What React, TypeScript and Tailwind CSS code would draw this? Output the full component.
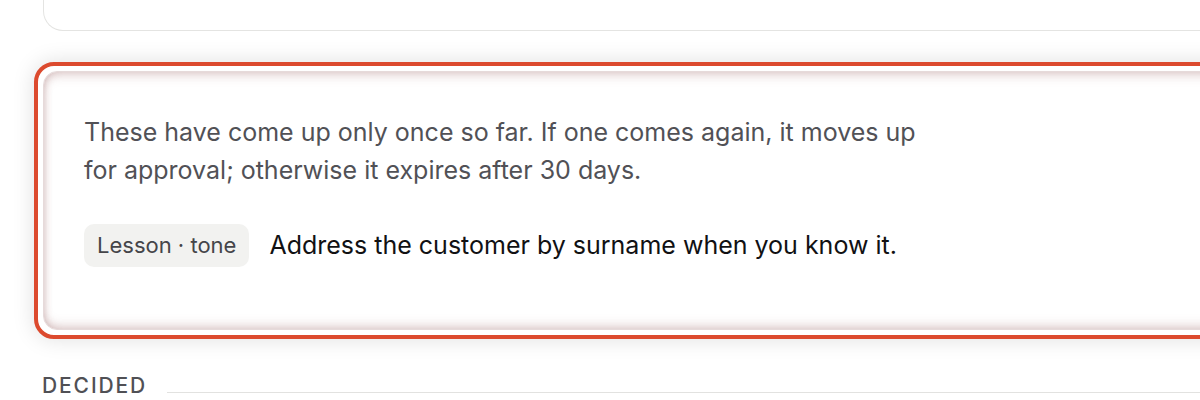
const App = () => {
  return (
    <div className="h-[400px] w-[1200px] overflow-hidden bg-white font-['Inter',sans-serif]">
      <div className="w-[1240px] pl-[34px]">
        {/* previous card, cut off at the top */}
        <div className="ml-[9px] h-[31px] rounded-b-[20px] border-x border-b border-[#e4e4e2] bg-white" />

        {/* pending lessons, highlighted */}
        <div className="mt-[31px] rounded-[20px] border-[4px] border-[#dc4a2e] bg-white p-[5px] shadow-[0_0_22px_rgba(0,0,0,0.13)]">
          <div className="rounded-[14px] border border-[#e6dada] bg-white px-[40px] pt-[41px] pb-[62px] shadow-[inset_0_7px_12px_-5px_rgba(150,90,90,0.35),inset_0_-7px_12px_-5px_rgba(150,90,90,0.35),inset_5px_0_8px_-5px_rgba(150,90,90,0.25)]">
            <p className="w-[860px] text-[25px] leading-[38px] text-[#515156]">
              These have come up only once so far. If one comes again, it moves up for approval; otherwise it expires after 30 days.
            </p>
            <div className="mt-[35px] flex items-center gap-[20px]">
              <span className="rounded-[10px] bg-[#f2f2f0] px-[13px] py-[8px] text-[22px] leading-[27px] text-[#454549]">
                Lesson · tone
              </span>
              <span className="text-[25px] text-[#111113]">
                Address the customer by surname when you know it.
              </span>
            </div>
          </div>
        </div>

        {/* next section header */}
        <div className="mt-[33px] flex items-end gap-[20px] pl-[8px]">
          <span className="text-[21px] font-medium leading-[27px] tracking-[0.09em] text-[#505055]">
            DECIDED
          </span>
          <div className="mb-[6px] h-px flex-1 bg-[#e2e2e0]" />
        </div>
      </div>
    </div>
  );
};

export default App;
